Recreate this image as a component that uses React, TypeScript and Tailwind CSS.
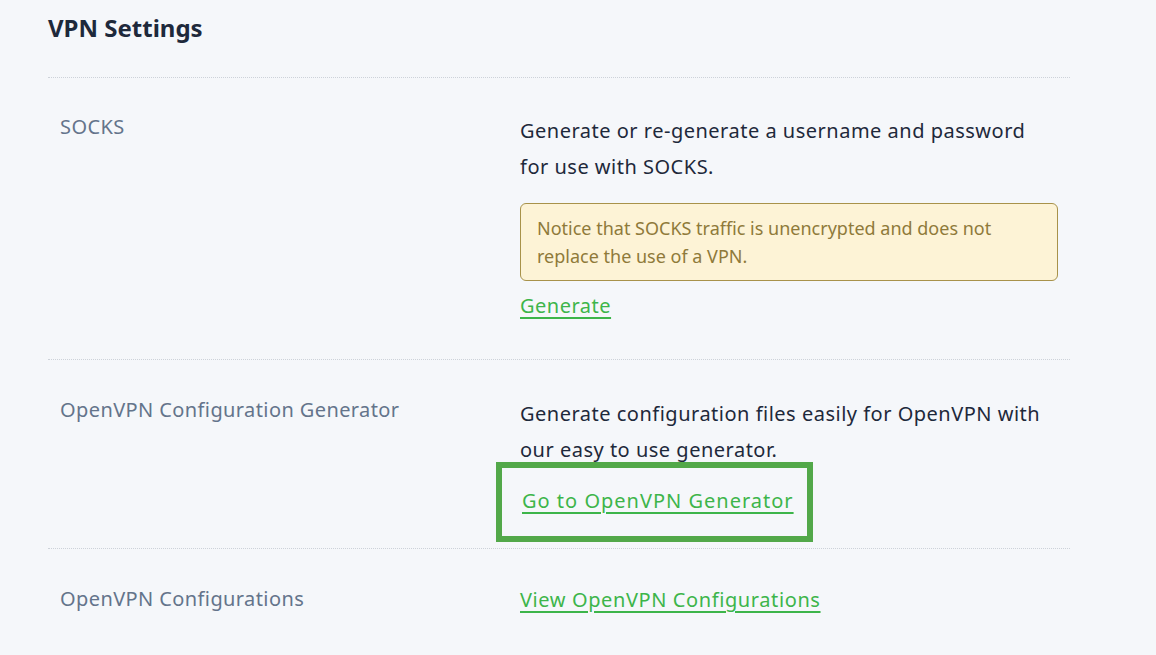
import React from 'react';

const rows = [
  { label: 'SOCKS', kind: 'socks' },
  { label: 'OpenVPN Configuration Generator', kind: 'generator' },
  { label: 'OpenVPN Configurations', kind: 'configs' },
];

function Label({ children, className = '' }: { children: React.ReactNode; className?: string }) {
  return (
    <div className={`w-[472px] shrink-0 pl-3 text-[20px] leading-[28px] tracking-[0.02em] text-[#64748b] ${className}`}>
      {children}
    </div>
  );
}

export default function App() {
  return (
    <div
      className="min-h-screen w-full bg-[#f5f7fa] pl-12 pt-[12px]"
      style={{ fontFamily: '"Noto Sans", "Open Sans", sans-serif' }}
    >
      <div className="w-[1022px]">
        <h1 className="text-[24px] leading-[32px] font-bold text-[#1e293b]">VPN Settings</h1>

        <div className="mt-[33px] border-t border-dotted border-[#cdd2d9]" />

        {/* SOCKS */}
        <div className="flex pt-[35px] pb-[35px]">
          <Label>{rows[0].label}</Label>
          <div className="w-[538px]">
            <p className="text-[20px] leading-[36px] tracking-[0.025em] text-[#1e293b]">
              Generate or re-generate a username and password for use with SOCKS.
            </p>
            <div className="mt-[18px] rounded-md border border-[#a8924a] bg-[#fdf3d6] px-4 py-[10px] text-[18px] leading-[28px] text-[#8f7a3a]">
              Notice that SOCKS traffic is unencrypted and does not replace the use of a VPN.
            </div>
            <a
              href="#"
              className="mt-[7px] block w-fit text-[20px] leading-[36px] tracking-[0.025em] text-[#3db54a] underline underline-offset-4"
            >
              Generate
            </a>
          </div>
        </div>

        <div className="border-t border-dotted border-[#cdd2d9]" />

        {/* Generator */}
        <div className="flex pt-[36px] pb-[29px]">
          <Label>{rows[1].label}</Label>
          <div className="w-[538px]">
            <p className="text-[20px] leading-[36px] tracking-[0.025em] text-[#1e293b]">
              Generate configuration files easily for OpenVPN with our easy to use generator.
            </p>
            <div className="relative mt-[15px] w-fit">
              <a
                href="#"
                className="block pl-[2px] text-[20px] leading-[36px] tracking-[0.05em] text-[#3db54a] underline underline-offset-4"
              >
                Go to OpenVPN Generator
              </a>
              <div className="absolute -left-[24px] -right-[19px] -top-[21px] -bottom-[23px] border-[6px] border-[#52a849]" />
            </div>
          </div>
        </div>

        <div className="border-t border-dotted border-[#cdd2d9]" />

        {/* Configurations */}
        <div className="flex pt-[33px]">
          <Label className="pt-[3px]">{rows[2].label}</Label>
          <a
            href="#"
            className="block w-fit text-[20px] leading-[36px] tracking-[0.03em] text-[#3db54a] underline underline-offset-4"
          >
            View OpenVPN Configurations
          </a>
        </div>
      </div>
    </div>
  );
}
